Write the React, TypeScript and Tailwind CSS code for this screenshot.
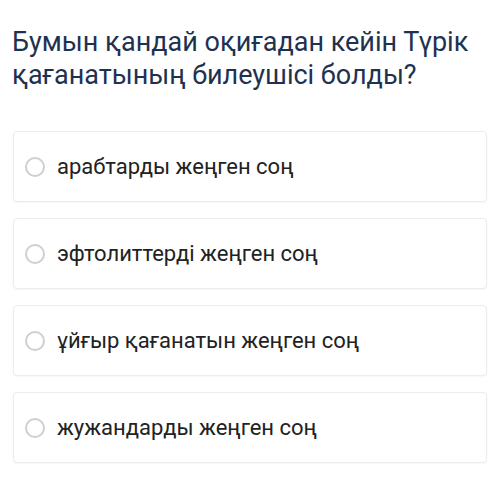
import React from "react";

const options = [
  "арабтарды жеңген соң",
  "эфтолиттерді жеңген соң",
  "ұйғыр қағанатын жеңген соң",
  "жужандарды жеңген соң",
];

export default function App() {
  return (
    <div
      className="w-[500px] h-[489px] bg-white overflow-hidden"
      style={{ fontFamily: "Roboto, 'Noto Sans', sans-serif" }}
    >
      <div className="pl-[12px] pr-[10px] pt-[26px] text-[27px] leading-[33px] text-[#1e3250]">
        Бумын қандай оқиғадан кейін Түрік қағанатының билеушісі болды?
      </div>
      <div className="mt-[39px] flex flex-col gap-[16px] pl-[13px] pr-[13px]">
        {options.map((o) => (
          <div
            key={o}
            className="h-[71px] flex items-center rounded-[4px] border border-[#ececec] bg-white shadow-[0_1px_2px_rgba(0,0,0,0.04)]"
          >
            <div className="ml-[11px] w-[20px] h-[20px] rounded-full border-2 border-[#cfcfcf]" />
            <span className="ml-[12px] text-[22px] text-[#222222]">{o}</span>
          </div>
        ))}
      </div>
    </div>
  );
}
